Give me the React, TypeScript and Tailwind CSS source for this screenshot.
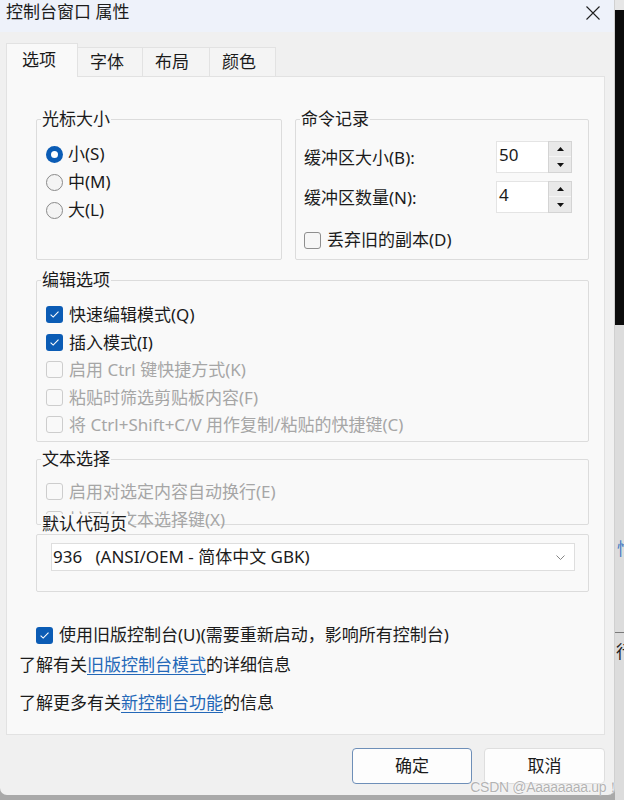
import type { ReactNode } from 'react'

type CheckState = 'on' | 'off' | 'disabled'

function Check({ state }: { state: CheckState }) {
  if (state === 'on') {
    return (
      <span className="flex h-[17px] w-[17px] shrink-0 items-center justify-center rounded-[3px] bg-[#0b5cb5]">
        <svg width="11" height="9" viewBox="0 0 11 9">
          <path d="M1.6 4.6 L4.2 7.1 L9.5 1.7" fill="none" stroke="#ffffff" strokeWidth="1.1" />
        </svg>
      </span>
    )
  }
  return (
    <span
      className={`h-[17px] w-[17px] shrink-0 rounded-[3px] border ${
        state === 'off' ? 'border-[#8e8e8e] bg-[#f6f6f6]' : 'border-[#cdcdcd] bg-[#f9f9f9]'
      }`}
    />
  )
}

function CheckRow({ state, label, h = 'h-[27.5px]' }: { state: CheckState; label: string; h?: string }) {
  return (
    <div className={`flex ${h} items-center gap-[6px] whitespace-nowrap`}>
      <Check state={state} />
      <span className={state === 'disabled' ? 'text-[#a6a6a6]' : ''}>{label}</span>
    </div>
  )
}

function Radio({ on, label }: { on?: boolean; label: string }) {
  return (
    <div className="flex h-[28px] items-center gap-[5px]">
      {on ? (
        <span className="flex h-[17px] w-[17px] items-center justify-center rounded-full bg-[#0b5cb5]">
          <span className="h-[7px] w-[7px] rounded-full bg-white" />
        </span>
      ) : (
        <span className="h-[17px] w-[17px] rounded-full border border-[#8a8a8a] bg-[#f4f4f4]" />
      )}
      <span>{label}</span>
    </div>
  )
}

function Group({ title, className = '', children }: { title: string; className?: string; children: ReactNode }) {
  return (
    <fieldset className={`rounded-[2px] border border-[#dcdcdc] ${className}`}>
      <legend className="ml-[4px] px-[1px] leading-[22px]">{title}</legend>
      {children}
    </fieldset>
  )
}

function Spin({ value }: { value: string }) {
  return (
    <div className="flex h-[32px]">
      <div className="h-[32px] w-[52px] border border-r-0 border-[#e4e4e4] bg-white pl-[2px] leading-[26px]">{value}</div>
      <div className="flex w-[24px] flex-col border border-[#d4d4d4] bg-[#e9e9e9]">
        <div className="flex h-[15px] items-center justify-center border-b border-[#f6f6f6]">
          <svg width="7" height="4" viewBox="0 0 7 4"><path d="M0 4 L3.5 0 L7 4 Z" fill="#111" /></svg>
        </div>
        <div className="flex flex-1 items-center justify-center">
          <svg width="7" height="4" viewBox="0 0 7 4"><path d="M0 0 L3.5 4 L7 0 Z" fill="#111" /></svg>
        </div>
      </div>
    </div>
  )
}

const TABS = [
  { label: '选项', w: 'w-[72px]' },
  { label: '字体', w: 'w-[65px]' },
  { label: '布局', w: 'w-[67px]' },
  { label: '颜色', w: 'w-[66px]' },
]

export default function App() {
  return (
    <div className="relative flex h-[800px] w-[624px] overflow-hidden bg-[#a9a9a9] font-['Noto_Sans','Noto_Sans_CJK_SC',sans-serif] text-[17px] text-[#1b1b1b]">
      {/* dialog */}
      <div className="flex h-[795px] w-[615px] shrink-0 flex-col overflow-hidden rounded-b-[7px] border-r border-[#d0d0d0] bg-[#f0f0f0]">
        {/* title bar */}
        <div className="flex h-[32px] shrink-0 items-start justify-between bg-[#eef2fa] pl-[6px] pr-[14px]">
          <span className="pt-[1px] leading-[22px]">控制台窗口 属性</span>
          <svg className="mt-[6px]" width="14" height="14" viewBox="0 0 14 14">
            <path d="M0.5 0.5 L13.5 13.5 M13.5 0.5 L0.5 13.5" stroke="#1f1f1f" strokeWidth="1.1" />
          </svg>
        </div>

        {/* tabs */}
        <div className="ml-[6px] mt-[11px] flex h-[33px] items-end">
          {TABS.map((t, i) =>
            i === 0 ? (
              <div key={t.label}
                className={`relative z-10 -mb-px h-[34px] ${t.w} border border-b-0 border-[#e2e2e2] bg-[#f9f9f9] pl-[15px] pt-[5px] leading-[22px]`}>
                {t.label}
              </div>
            ) : (
              <div key={t.label}
                className={`h-[29px] ${t.w} border-r border-t border-[#e2e2e2] bg-[#f4f4f4] pl-[12px] pt-[3px] leading-[22px]`}>
                {t.label}
              </div>
            )
          )}
        </div>

        {/* panel */}
        <div className="ml-[6px] h-[659px] w-[599px] border border-[#e2e2e2] bg-[#f9f9f9] pl-[12px] pr-[15px] pt-[31px]">
          <div className="pl-[17px]">
            {/* top row */}
            <div className="flex gap-[13px]">
              <Group title="光标大小" className="w-[246px]">
                <div className="h-[129px] pl-[9px] pt-[10px]">
                  <Radio on label="小(S)" />
                  <Radio label="中(M)" />
                  <Radio label="大(L)" />
                </div>
              </Group>
              <Group title="命令记录" className="w-[294px]">
                <div className="h-[129px] pl-[8px] pr-[16px] pt-[11px]">
                  <div className="flex h-[32px] items-center justify-between">
                    <span className="pt-[2px]">缓冲区大小(B):</span>
                    <Spin value="50" />
                  </div>
                  <div className="mt-[8px] flex h-[32px] items-center justify-between">
                    <span className="pt-[2px]">缓冲区数量(N):</span>
                    <Spin value="4" />
                  </div>
                  <div className="mt-[15px]">
                    <CheckRow state="off" label="丢弃旧的副本(D)" h="h-[24px]" />
                  </div>
                </div>
              </Group>
            </div>

            {/* edit options */}
            <Group title="编辑选项" className="mt-[9px]">
              <div className="h-[150px] pl-[9px] pt-[10px]">
                <CheckRow state="on" label="快速编辑模式(Q)" />
                <CheckRow state="on" label="插入模式(I)" />
                <CheckRow state="disabled" label="启用 Ctrl 键快捷方式(K)" />
                <CheckRow state="disabled" label="粘贴时筛选剪贴板内容(F)" />
                <CheckRow state="disabled" label="将 Ctrl+Shift+C/V 用作复制/粘贴的快捷键(C)" />
              </div>
            </Group>

            {/* text selection */}
            <Group title="文本选择" className="mt-[6px]">
              <div className="h-[54px] pl-[9px] pt-[8px]">
                <CheckRow state="disabled" label="启用对选定内容自动换行(E)" />
                <CheckRow state="disabled" label="扩展的文本选择键(X)" />
              </div>
            </Group>

            {/* code page */}
            <div className="relative -mt-[11px] ml-[5px] w-fit bg-[#f9f9f9] px-[1px] leading-[20px]">默认代码页</div>
            <div className="rounded-[2px] border border-[#dcdcdc] pb-[20px] pl-[14px] pr-[13px] pt-[8px]">
              <div className="flex h-[28px] items-center justify-between border border-[#dedede] bg-white pl-[1px] pr-[9px]">
                <span className="whitespace-pre leading-[22px]">936   (ANSI/OEM - 简体中文 GBK)</span>
                <svg width="9" height="5" viewBox="0 0 9 5">
                  <path d="M0.5 0.5 L4.5 4.5 L8.5 0.5" fill="none" stroke="#777" strokeWidth="0.9" />
                </svg>
              </div>
            </div>

            <div className="mt-[31px]">
              <CheckRow state="on" label="使用旧版控制台(U)(需要重新启动，影响所有控制台)" h="h-[24px]" />
            </div>
          </div>

          <div className="mt-[6px] flex h-[24px] items-center whitespace-nowrap">
            了解有关<span className="text-[#2468b8] underline underline-offset-[3px]">旧版控制台模式</span>的详细信息
          </div>
          <div className="mt-[14px] flex h-[24px] items-center whitespace-nowrap">
            了解更多有关<span className="text-[#2468b8] underline underline-offset-[3px]">新控制台功能</span>的信息
          </div>
        </div>

        {/* buttons */}
        <div className="mt-[13px] flex justify-end gap-[12px] pr-[9px]">
          <button className="h-[36px] w-[120px] rounded-[4px] border border-[#6e8fb8] bg-[#fdfdfd] leading-[22px]">确定</button>
          <button className="h-[36px] w-[121px] rounded-[4px] border border-[#dedede] bg-[#fdfdfd] leading-[22px]">取消</button>
        </div>
      </div>

      {/* background window strip */}
      <div className="flex w-[9px] flex-col overflow-hidden">
        <div className="h-[10px] bg-[#e6e6e6]" />
        <div className="h-[315px] bg-[#0c0c0c]" />
        <div className="flex flex-1 flex-col bg-[#dcdcdc]">
          <span className="mt-[215px] pl-[2px] leading-[17px] text-[#3b78c4]">忙</span>
          <div className="mt-[75px] h-px bg-[#7a7a7a]" />
          <span className="mt-[10px] pl-[1px] leading-[17px] text-[#222]">行</span>
        </div>
      </div>

      {/* watermark */}
      <span className="absolute right-[4px] top-[779px] font-['Liberation_Sans',sans-serif] text-[14px] leading-[16px] tracking-[-0.3px] text-[#b3b3b3] [text-shadow:0_0_2px_#fff,0_0_1px_#fff]">
        CSDN @Aaaaaaaa.up！
      </span>
    </div>
  )
}
